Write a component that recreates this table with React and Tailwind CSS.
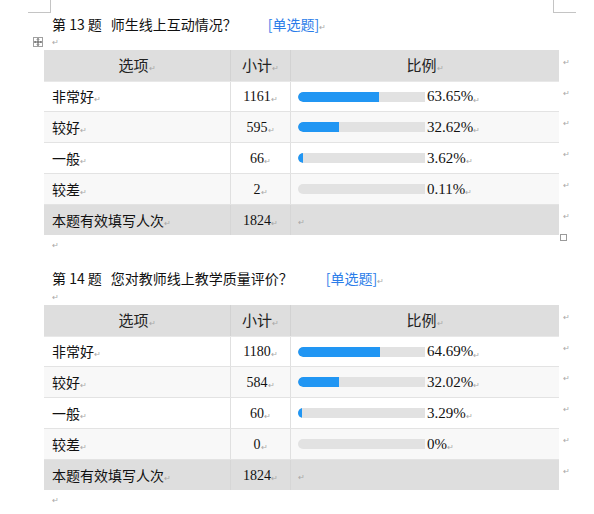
import React from "react";

const CJK = "font-['Noto_Sans_CJK_SC','Noto_Sans',sans-serif]";
const SERIF = "font-['Liberation_Serif','Noto_Sans_CJK_SC',serif]";

const questions = [
  {
    no: 13,
    title: "师生线上互动情况？",
    gap: "ml-[31px]",
    rows: [
      ["非常好", 1161, 63.65],
      ["较好", 595, 32.62],
      ["一般", 66, 3.62],
      ["较差", 2, 0.11],
    ],
    total: 1824,
  },
  {
    no: 14,
    title: "您对教师线上教学质量评价？",
    gap: "ml-[33px]",
    rows: [
      ["非常好", 1180, 64.69],
      ["较好", 584, 32.02],
      ["一般", 60, 3.29],
      ["较差", 0, 0],
    ],
    total: 1824,
  },
];

const rowHeights = ["h-[30px]", "h-[31px]", "h-[31px]", "h-[31px]"];

function Mark({ className = "" }) {
  return (
    <span className={`text-[8px] leading-none text-[#a8a8a8] ${CJK} ${className}`}>↵</span>
  );
}

function MoveHandle() {
  return (
    <div className="w-[10px] h-[10px] border border-[#a0a0a0] bg-white flex items-center justify-center">
      <svg width="8" height="8" viewBox="0 0 8 8" fill="none" stroke="#555" strokeWidth="1">
        <path d="M4 0.5v7M0.5 4h7" />
        <path d="M3 1.5l1-1 1 1M3 6.5l1 1 1-1M1.5 3l-1 1 1 1M6.5 3l1 1-1 1" />
      </svg>
    </div>
  );
}

function Bar({ pct }) {
  return (
    <div className="flex items-center">
      <div className="w-[127px] h-[10px] rounded-l-full bg-[#e2e2e2] overflow-hidden">
        <div
          className="h-full bg-[#2196f3] rounded-l-full"
          style={{ width: pct > 0.5 ? `${(pct / 100) * 127}px` : "0px" }}
        />
      </div>
      <span className={`ml-[2px] text-[15px] text-[#111] ${SERIF}`}>
        {pct === 0 ? "0" : pct.toFixed(2)}%
      </span>
      <Mark className="mt-[6px]" />
    </div>
  );
}

function Table({ q }) {
  const cols = "grid grid-cols-[187px_60px_268px] w-[515px]";
  return (
    <div className="ml-[44px] flex flex-col">
      {/* header */}
      <div className="flex">
        <div className={`${cols} h-[32px] bg-[#dedede] border-b border-[#e8e8e8] text-[15px] text-[#222] ${CJK}`}>
          <div className="flex items-center justify-center border-r border-[#d2d2d2]">
            选项<Mark className="mt-[5px]" />
          </div>
          <div className="flex items-center justify-center border-r border-[#d2d2d2]">
            小计<Mark className="mt-[5px]" />
          </div>
          <div className="flex items-center justify-center">
            比例<Mark className="mt-[5px]" />
          </div>
        </div>
        <Mark className="ml-[4px] mt-[8px]" />
      </div>

      {q.rows.map(([name, count, pct], i) => (
        <div key={name} className="flex">
          <div
            className={`${cols} ${rowHeights[i]} border-b border-[#e3e3e3] ${
              i % 2 === 1 ? "bg-[#f8f8f8]" : "bg-white"
            }`}
          >
            <div className={`flex items-center pl-2 text-[14px] text-[#111] border-r border-[#e0e0e0] ${CJK}`}>
              {name}
              <Mark className="mt-[5px]" />
            </div>
            <div className={`flex items-center justify-center text-[14px] text-[#111] border-r border-[#e0e0e0] ${SERIF}`}>
              {count}
              <Mark className="mt-[5px]" />
            </div>
            <div className="flex items-center pl-[7px]">
              <Bar pct={pct} />
            </div>
          </div>
          <Mark className="ml-[4px] mt-[7px]" />
        </div>
      ))}

      {/* total */}
      <div className="flex">
        <div className={`${cols} h-[30px] bg-[#dedede]`}>
          <div className={`flex items-center pl-2 text-[14px] text-[#111] border-r border-[#d6d6d6] ${CJK}`}>
            本题有效填写人次
            <Mark className="mt-[5px]" />
          </div>
          <div className={`flex items-center justify-center text-[14px] text-[#111] border-r border-[#d6d6d6] ${SERIF}`}>
            {q.total}
            <Mark className="mt-[5px]" />
          </div>
          <div className="flex items-center pl-[7px]">
            <Mark className="mt-[3px]" />
          </div>
        </div>
        <Mark className="ml-[4px] mt-[7px]" />
      </div>
    </div>
  );
}

function Title({ q }) {
  return (
    <div className={`h-[20px] pl-[52px] flex items-center text-[14px] text-[#111] ${CJK}`}>
      <span>第 {q.no} 题</span>
      <span className="ml-[9px]">{q.title}</span>
      <span className={`${q.gap} text-[#2b7de9]`}>[单选题]</span>
      <Mark className="mt-[6px]" />
    </div>
  );
}

export default function App() {
  const [q1, q2] = questions;
  return (
    <div className="w-[594px] h-[514px] bg-white overflow-hidden flex flex-col">
      {/* page margin corners */}
      <div className="h-[13px] flex">
        <div className="ml-[28px] w-[23px] h-[13px] border-r border-b border-[#c4c4c4]" />
        <div className="ml-[502px] w-[23px] h-[13px] border-l border-b border-[#c4c4c4]" />
      </div>

      <div className="mt-[1px]">
        <Title q={q1} />
      </div>

      <div className="h-[16px] flex items-center pl-[33px]">
        <MoveHandle />
        <Mark className="ml-[9px]" />
      </div>

      <Table q={q1} />

      <div className="h-[20px] flex items-center pl-[52px] relative">
        <Mark />
        <div className="absolute left-[560px] top-[-1px] w-[7px] h-[7px] border border-[#9a9a9a] bg-white" />
      </div>

      <div className="mt-[13px]">
        <Title q={q2} />
      </div>

      <div className="h-[17px] flex items-center pl-[52px]">
        <Mark />
      </div>

      <Table q={q2} />

      <div className="h-[20px] flex items-center pl-[52px]">
        <Mark />
      </div>
    </div>
  );
}
